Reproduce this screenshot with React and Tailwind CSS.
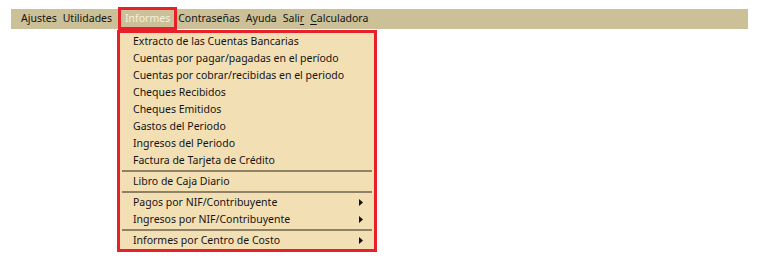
const topItems = [
  { label: "Ajustes" },
  { label: "Utilidades" },
  { label: "Informes", active: true },
  { label: "Contraseñas" },
  { label: "Ayuda" },
  { label: "Salir", key: 4 },
  { label: "Calculadora", key: 0 },
];

const groups = [
  [
    { label: "Extracto de las Cuentas Bancarias" },
    { label: "Cuentas por pagar/pagadas en el período" },
    { label: "Cuentas por cobrar/recibidas en el periodo" },
    { label: "Cheques Recibidos" },
    { label: "Cheques Emitidos" },
    { label: "Gastos del Periodo" },
    { label: "Ingresos del Periodo" },
    { label: "Factura de Tarjeta de Crédito" },
  ],
  [{ label: "Libro de Caja Diario" }],
  [
    { label: "Pagos por NIF/Contribuyente", sub: true },
    { label: "Ingresos por NIF/Contribuyente", sub: true },
  ],
  [{ label: "Informes por Centro de Costo", sub: true }],
];

// underline the access key letter
const Label = ({ text, k }) => {
  if (k === undefined) return text;
  return (
    <>
      {text.slice(0, k)}
      <span className="underline underline-offset-2">{text[k]}</span>
      {text.slice(k + 1)}
    </>
  );
};

const App = () => {
  return (
    <div className="relative w-[759px] h-[263px] bg-white text-[10.5px] text-[#141414] font-['Noto_Sans',sans-serif] whitespace-nowrap">
      <div className="ml-[11px] pt-[9px] w-[748px]">
        <div className="flex items-center h-[20px] w-[737px] bg-[#cbc097] pl-[7px]">
          {topItems.map((item) =>
            item.active ? (
              <div
                key={item.label}
                className="flex items-center h-[23px] -mt-[1px] px-[4px] ml-[3px] mr-[-2px] border-[3px] border-[#e8202a] text-[#f7f1df]"
              >
                {item.label}
              </div>
            ) : (
              <span key={item.label} className="px-[3px]">
                <Label text={item.label} k={item.key} />
              </span>
            )
          )}
        </div>
      </div>

      <div className="absolute left-[117px] top-[30px] w-[260px] border-[3px] border-[#e8202a] bg-[#f2dfb4]">
        {groups.map((g, gi) => (
          <div key={gi}>
            {gi > 0 && <div className="h-[2px] mx-[2px] my-[1px] bg-[#8e8166]" />}
            {g.map((it) => (
              <div key={it.label} className="flex items-center justify-between h-[17px] pl-[13px] pr-[11px]">
                <span>{it.label}</span>
                {it.sub && (
                  <svg width="4" height="7" viewBox="0 0 4 7">
                    <path d="M0 0 L4 3.5 L0 7 Z" fill="#111" />
                  </svg>
                )}
              </div>
            ))}
          </div>
        ))}
      </div>
    </div>
  );
};

export default App;
